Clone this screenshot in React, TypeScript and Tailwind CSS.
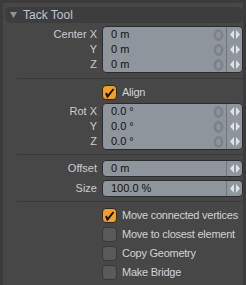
import React from "react";

const font = "font-['Liberation_Sans',Arial,sans-serif]";

function Arrows() {
  return (
    <svg width="10" height="9" viewBox="0 0 10 9">
      <path d="M4 0 L0 4.5 L4 9 Z" fill="#dfe3e7" />
      <path d="M6 0 L10 4.5 L6 9 Z" fill="#dfe3e7" />
    </svg>
  );
}

function ResetIcon() {
  return (
    <svg width="11" height="12" viewBox="0 0 11 12">
      <ellipse cx="5.5" cy="6" rx="3.6" ry="4.6" fill="none" stroke="#7c8288" strokeWidth="2.6" />
    </svg>
  );
}

function Check() {
  return (
    <svg width="13" height="13" viewBox="0 0 13 13">
      <path d="M3 7 L4.5 10.5 L10.5 3" fill="none" stroke="#111" strokeWidth="2" />
    </svg>
  );
}

function Checkbox({ checked, label }: { checked?: boolean; label: string }) {
  return (
    <div className="flex h-[15px] items-center">
      <div className="w-[97px] shrink-0" />
      <div
        className={`flex h-[15px] w-[15px] shrink-0 items-center justify-center rounded-[4px] border ${
          checked ? "border-[#2a2a2a] bg-[#f0a02c]" : "border-[#383838] bg-[#5a5a5a]"
        }`}
      >
        {checked && <Check />}
      </div>
      <span className="ml-[5px] whitespace-nowrap text-[11px] tracking-[-0.25px] text-[#d2d4d6]">{label}</span>
    </div>
  );
}

function FieldGroup({ rows, reset = true }: { rows: { label: string; value: string }[]; reset?: boolean }) {
  return (
    <div className="flex">
      <div className="flex w-[92px] flex-col pt-px">
        {rows.map((r) => (
          <div key={r.label} className="flex h-[15px] items-center justify-end whitespace-nowrap text-[11px] text-[#c9ced4]">
            {r.label}
          </div>
        ))}
      </div>
      <div className="ml-[5px] flex w-[141px] rounded-[4px] border border-[#2c2c2c] bg-[#8e959c]">
        <div className="flex flex-1 flex-col">
          {rows.map((r) => (
            <div key={r.label} className="flex h-[15px] items-center pl-[8px] pr-[2px] text-[11px] text-[#111]">
              <span className="flex-1">{r.value}</span>
              {reset && <ResetIcon />}
            </div>
          ))}
        </div>
        <div className="flex w-[16px] flex-col border-l border-[#6f757b]">
          {rows.map((r) => (
            <div key={r.label} className="flex h-[15px] items-center justify-center">
              <Arrows />
            </div>
          ))}
        </div>
      </div>
    </div>
  );
}

function Divider() {
  return <div className="ml-[12px] h-px bg-[#393939]" />;
}

export default function App() {
  return (
    <div className={`h-[285px] w-[246px] bg-[#3b3b3b] px-[3px] pt-[3px] ${font}`}>
      <div className="h-full bg-[#474747] pl-[2px] pt-[4px]">
        <div className="flex h-[16px] items-center rounded-[5px] bg-[#3d3d3d] pl-[5px] text-[12px] text-[#bcc8da]">
          <svg width="7" height="6" viewBox="0 0 7 6" className="mr-[6px]">
            <path d="M0 0 L7 0 L3.5 6 Z" fill="#8d939a" />
          </svg>
          Tack Tool
        </div>

        <div className="mt-[3px]">
          <FieldGroup
            rows={[
              { label: "Center X", value: "0 m" },
              { label: "Y", value: "0 m" },
              { label: "Z", value: "0 m" },
            ]}
          />
        </div>

        <div className="mt-[5px]">
          <Divider />
        </div>

        <div className="mt-[6px]">
          <Checkbox checked label="Align" />
        </div>

        <div className="mt-[3px]">
          <FieldGroup
            rows={[
              { label: "Rot X", value: "0.0 °" },
              { label: "Y", value: "0.0 °" },
              { label: "Z", value: "0.0 °" },
            ]}
          />
        </div>

        <div className="mt-[4px]">
          <Divider />
        </div>

        <div className="mt-[5px]">
          <FieldGroup reset={false} rows={[{ label: "Offset", value: "0 m" }]} />
        </div>
        <div className="mt-[3px]">
          <FieldGroup reset={false} rows={[{ label: "Size", value: "100.0 %" }]} />
        </div>

        <div className="mt-[4px]">
          <Divider />
        </div>

        <div className="mt-[6px] flex flex-col gap-[4px]">
          <Checkbox checked label="Move connected vertices" />
          <Checkbox label="Move to closest element" />
          <Checkbox label="Copy Geometry" />
          <Checkbox label="Make Bridge" />
        </div>
      </div>
    </div>
  );
}
